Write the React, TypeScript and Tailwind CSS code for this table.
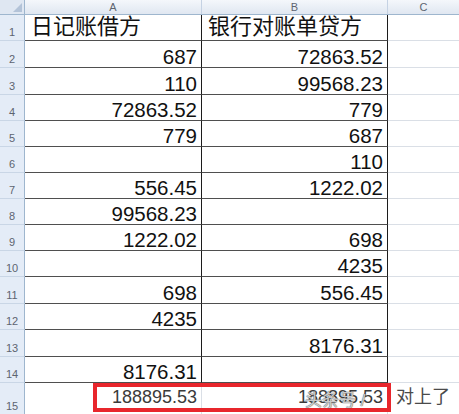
import React from "react";

interface Row {
  n: number;
  h: string;
  a: string;
  b: string;
  title?: boolean;
}

const rows: Row[] = [
  { n: 1, h: "h-[26px]", a: "日记账借方", b: "银行对账单贷方", title: true },
  { n: 2, h: "h-[27px]", a: "687", b: "72863.52" },
  { n: 3, h: "h-[27px]", a: "110", b: "99568.23" },
  { n: 4, h: "h-[26px]", a: "72863.52", b: "779" },
  { n: 5, h: "h-[26px]", a: "779", b: "687" },
  { n: 6, h: "h-[26px]", a: "", b: "110" },
  { n: 7, h: "h-[26px]", a: "556.45", b: "1222.02" },
  { n: 8, h: "h-[26px]", a: "99568.23", b: "" },
  { n: 9, h: "h-[26px]", a: "1222.02", b: "698" },
  { n: 10, h: "h-[26px]", a: "", b: "4235" },
  { n: 11, h: "h-[27px]", a: "698", b: "556.45" },
  { n: 12, h: "h-[26px]", a: "4235", b: "" },
  { n: 13, h: "h-[27px]", a: "", b: "8176.31" },
  { n: 14, h: "h-[26px]", a: "8176.31", b: "" },
];

const font = "font-['Liberation_Sans','Noto_Sans_CJK_SC',sans-serif]";
const grid = "grid grid-cols-[25px_177px_186px_1fr]";

const RowHead = ({ n, h }: { n: number; h: string }) => (
  <div
    className={`${h} flex items-end justify-center pb-[2px] bg-[#e4ecf7] border-r border-b border-r-[#9eb6ce] border-b-[#c9d6e6] text-[11px] leading-none text-[#5d6470]`}
  >
    {n}
  </div>
);

const Cell = ({ text, title }: { text: string; title?: boolean }) => (
  <div
    className={`flex items-end border-r border-b border-r-[#1c1c1c] border-b-[#4f4f4f] ${
      title ? "justify-start pl-[6px] pb-[2px] text-[22px]" : "justify-end pr-[4px] text-[20.5px]"
    } leading-none text-[#111]`}
  >
    {text}
  </div>
);

export default function App() {
  return (
    <div className={`w-[459px] h-[414px] overflow-hidden bg-white ${font}`}>
      {/* Column headers */}
      <div className={`${grid} h-[15px] bg-[linear-gradient(to_bottom,#f4f7fb,#e0e7f1)] border-b border-[#9eb6ce] text-[11px] leading-none text-[#5d6470]`}>
        <div className="relative border-r border-[#9eb6ce] bg-[#dfe7f2]">
          <svg className="absolute right-[2px] bottom-[2px]" width="9" height="9" viewBox="0 0 9 9">
            <polygon points="9,0 9,9 0,9" fill="#b3c3d8" />
          </svg>
        </div>
        <div className="flex items-center justify-center border-r border-[#c5d2e3]">A</div>
        <div className="flex items-center justify-center border-r border-[#c5d2e3]">B</div>
        <div className="flex items-center justify-center">C</div>
      </div>

      {/* Data rows */}
      {rows.map((r) => (
        <div key={r.n} className={`${grid} ${r.h}`}>
          <RowHead n={r.n} h={r.h} />
          <Cell text={r.a} title={r.title} />
          <Cell text={r.b} title={r.title} />
          <div className="border-b border-[#dadfe6]" />
        </div>
      ))}

      {/* Total row */}
      <div className={`${grid} h-[32px] relative`}>
        <RowHead n={15} h="h-[32px]" />
        <div className="flex items-end justify-end pr-[4px] pb-[9px] border-r border-[#dadfe6] text-[18px] leading-none text-[#3a3a3a]">
          188895.53
        </div>
        <div className="flex items-end justify-end pr-[4px] pb-[9px] border-r border-[#dadfe6] text-[18px] leading-none text-[#3a3a3a]">
          188895.53
        </div>
        <div className="flex items-end pl-[8px] pb-[9px] text-[18px] leading-none text-[#4a4a4a]">
          对上了
        </div>

        {/* highlight box */}
        <div className="absolute left-[93px] top-0 w-[298px] h-[29px] border-[4px] border-[#e8262c]" />

        {/* watermark */}
        <span className="absolute left-[305px] top-[9px] text-[17px] leading-none text-white/70 pointer-events-none [text-shadow:0_0_1px_#555,0_0_1px_#555]">
          头条号 /
        </span>
      </div>
    </div>
  );
}
